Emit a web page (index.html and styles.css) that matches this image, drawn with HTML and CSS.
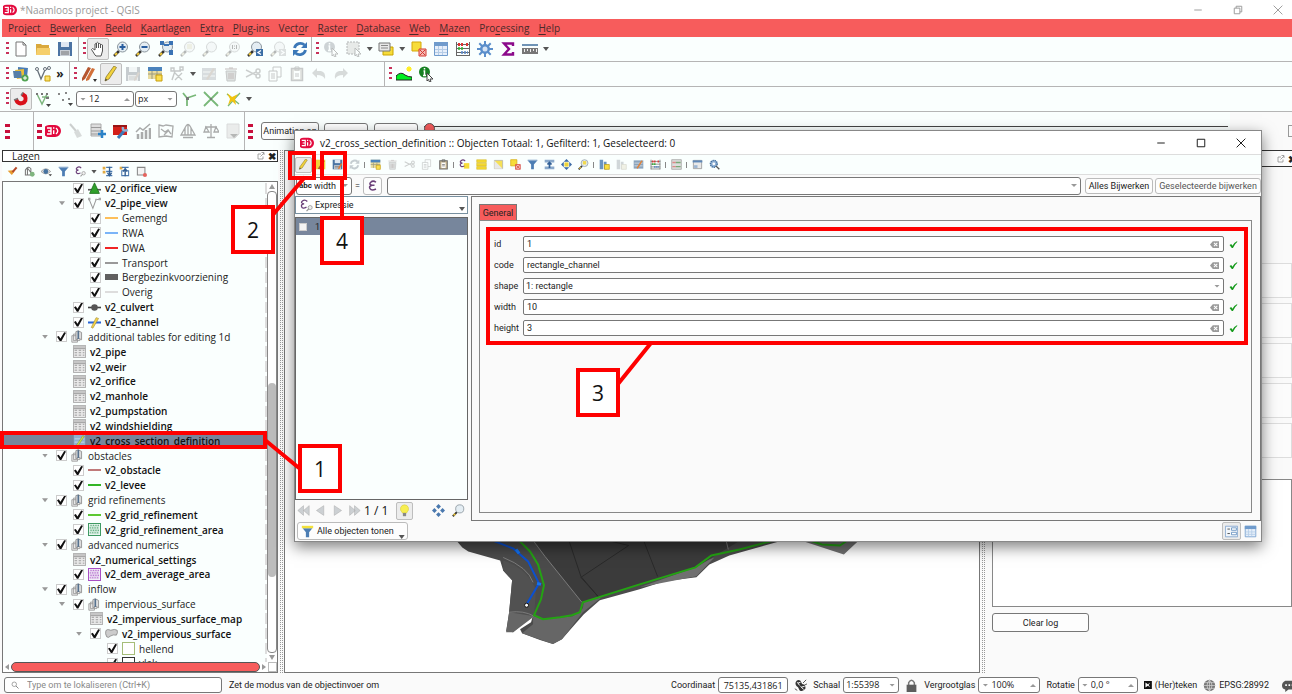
FILE: index.html
```html
<!DOCTYPE html>
<html lang="nl">
<head>
<meta charset="utf-8">
<title>*Naamloos project - QGIS</title>
<link rel="stylesheet" href="styles.css">
</head>
<body>
<svg class="sprite" aria-hidden="true">
<symbol id="logo" viewBox="0 0 16 16"><path d="M4 2h6a6 6 0 0 1 0 12H4a6 6 0 0 1 0-12z" fill="#e30a3e"/><path d="M2 5h4v6H2M3 8h3M8.700 7.200V11M8.700 4.300v1.500M11 5q3.500 3 0 6" fill="none" stroke="#fff" stroke-width="1.400"/></symbol>
<symbol id="new" viewBox="0 0 16 16"><path d="M3 1h7l3 3v11H3zM10 1v3h3" fill="#fff" stroke="#777"/></symbol>
<symbol id="open" viewBox="0 0 16 16"><path d="M1 3h5l1 1h7v10H1z" fill="#d9a93c"/><path d="M2 7h13v7H1z" fill="#f5cf6b"/></symbol>
<symbol id="save" viewBox="0 0 16 16"><path d="M1 1h14v14H1z" fill="#4b74a3"/><path d="M4 1h8v5H4z" fill="#dfe8f2"/><path d="M3 9h10v6H3z" fill="#c9cfd6"/><path d="M4 11h8M4 13h8" stroke="#777"/></symbol>
<symbol id="hand" viewBox="0 0 16 16"><path d="M5 14 1.500 8.500l1-1L5 9V3q1-1 1.500 0V2q1-1.500 2 0v1q1-1 2 0v1q1-1 2 0v6L11 15H6zM6.500 3v4M8.500 3v4M10.500 4v3" fill="#fff" stroke="#555"/></symbol>
<symbol id="lens" viewBox="0 0 16 16"><path d="M1 15l5-5" stroke="#333" stroke-width="2.500"/><path d="M2 14l2-2" stroke="#f0c93a" stroke-width="2"/><circle cx="9.500" cy="6" r="5" fill="#e4edf3" stroke="#8a959d"/></symbol>
<symbol id="zin" viewBox="0 0 16 16"><use href="#lens"/><path d="M9.500 3v6M6.500 6h6" stroke="#285d9e" stroke-width="2"/></symbol>
<symbol id="zout" viewBox="0 0 16 16"><use href="#lens"/><path d="M6.500 6h6" stroke="#285d9e" stroke-width="2"/></symbol>
<symbol id="zfull" viewBox="0 0 16 16"><use href="#lens"/><path d="M2 0h4v4H2zM11 0h4v4h-4zM11 9h4v5h-4zM6 3h5v2H6z" fill="#3a73b5"/></symbol>
<symbol id="zlay" viewBox="0 0 16 16"><use href="#lens"/><path d="M7 3h5v5H7z" fill="#f2d94e"/></symbol>
<symbol id="z11" viewBox="0 0 16 16"><use href="#lens"/><path d="M7.500 4v4M11.500 4v4M9.500 4.500v1M9.500 7v1" stroke="#333"/></symbol>
<symbol id="zprev" viewBox="0 0 16 16"><use href="#lens"/><path d="M9 8h7v7H9z" fill="#3a6da5"/><path d="M14 9.500l-3 2 3 2" fill="none" stroke="#fff" stroke-width="1.300"/></symbol>
<symbol id="znext" viewBox="0 0 16 16"><use href="#lens"/><path d="M9 8h7v7H9z" fill="#9ab"/><path d="M11 9.500l3 2-3 2" fill="none" stroke="#fff" stroke-width="1.300"/></symbol>
<symbol id="refresh" viewBox="0 0 16 16"><path d="M2.500 7a6 6 0 0 1 10-3M13.500 9a6 6 0 0 1-10 3" fill="none" stroke="#3b78b8" stroke-width="2.800"/><path d="M15 1v6H9zM1 15V9h6z" fill="#3b78b8"/></symbol>
<symbol id="cur" viewBox="0 0 16 16"><path d="M9 7l6 6-3 0 1 2.500-1.500.5-1-2.500L9 15z" fill="#fff" stroke="#444"/></symbol>
<symbol id="ident" viewBox="0 0 16 16"><circle cx="6.500" cy="6" r="5.500" fill="#168022"/><path d="M6.500 2v1.500M5.500 5h1v4.500M5 9.500h3" stroke="#fff" stroke-width="1.500" fill="none"/><use href="#cur"/></symbol>
<symbol id="identb" viewBox="0 0 16 16"><circle cx="6.500" cy="6" r="5.500" fill="#5c88b4"/><path d="M6.500 2v1.500M5.500 5h1v4.500M5 9.500h3" stroke="#fff" stroke-width="1.500" fill="none"/><use href="#cur"/></symbol>
<symbol id="select" viewBox="0 0 16 16"><path d="M1 1h12v12H1z" fill="#c8c8a8" stroke="#333" stroke-dasharray="2 1"/><use href="#cur"/></symbol>
<symbol id="layers" viewBox="0 0 16 16"><path d="M5 6h10v8H5z" fill="#f7dc3a" stroke="#c9a400"/><path d="M1 2h11v8H1z" fill="#e8e8e8" stroke="#777"/><path d="M3 4.500h7M3 7h7" stroke="#888"/></symbol>
<symbol id="desel" viewBox="0 0 16 16"><path d="M1 1h9v9H1z" fill="#f7dc3a" stroke="#d4a70a"/><path d="M8 8h7v7H8z" fill="#f3bcb6" stroke="#d43a33"/><path d="M9 14l5-5M9 9l5 5" stroke="#d43a33"/></symbol>
<symbol id="table" viewBox="0 0 16 16"><path d="M1.500 1.500h13v13h-13z" fill="#e6effa" stroke="#6f9bcc"/><path d="M1 1h14v4H1z" fill="#6f9bcc"/><path d="M5.500 5v9M9.500 5v9M2 8.500h12M2 11.500h12" stroke="#b4cce6"/></symbol>
<symbol id="abacus" viewBox="0 0 16 16"><path d="M1.500 1v14M14.500 1v14M1 14.500h14M1 3.500h14M1 7.500h14M1 11.500h14" stroke="#666" fill="none"/><path d="M3 3.500h2M6 3.500h2M11 3.500h2" stroke="#d33" stroke-width="3"/><path d="M3 7.500h2M6 7.500h2" stroke="#3a3" stroke-width="2.500"/><path d="M6 11.500h2M9 11.500h2M12 11.500h1" stroke="#5a85c0" stroke-width="2.500"/></symbol>
<symbol id="gear" viewBox="0 0 16 16"><path d="M8 0v16M0 8h16M2.300 2.300l11.400 11.400M13.700 2.300L2.300 13.700" stroke="#5b8fcb" stroke-width="2"/><circle cx="8" cy="8" r="5" fill="#5b8fcb"/><circle cx="8" cy="8" r="2.500" fill="#d5e4f5"/></symbol>
<symbol id="sigma" viewBox="0 0 16 16"><path d="M13 5V2.500H4L9 8l-5 5.500h9V11" fill="none" stroke="#8b0a8b" stroke-width="2.400"/></symbol>
<symbol id="ruler" viewBox="0 0 16 16"><path d="M0 4h16" stroke="#41709e" stroke-width="1.500"/><path d="M0 7h16v6H0z" fill="#777"/><path d="M2.500 8v3M5.500 8v2M8.500 8v3M11.500 8v2M14.500 8v3" stroke="#eee"/></symbol>
<symbol id="addlay" viewBox="0 0 16 16"><path d="M5 1l10 1-1 9-9-1z" fill="#4a7db5"/><path d="M2 4l9-1 0 9-7 1z" fill="#e9bd3a"/><path d="M0 5l8 0 1 7-8 0z" fill="#557fa8"/><circle cx="12" cy="12" r="3.500" fill="#51a351"/><path d="M12 10v4M10 12h4" stroke="#fff"/></symbol>
<symbol id="vlay" viewBox="0 0 16 16"><path d="M2 3l4 10 4-9 4-2" fill="none" stroke="#66717a" stroke-width="1.300"/><circle cx="2" cy="3" r="1.500" fill="#fff" stroke="#66717a"/><circle cx="10" cy="3" r="1.500" fill="#fff" stroke="#66717a"/><circle cx="14" cy="2" r="1.500" fill="#fff" stroke="#66717a"/><path d="M10 10h5v5h-5z" fill="#fbe36a" stroke="#c79e0b"/></symbol>
<symbol id="pens" viewBox="0 0 16 16"><path d="M1 12L7 1l3 1-6 11-3 2z" fill="#b5562f"/><path d="M5 13l6-11 3 1-6 11-3 1z" fill="#d2713a"/><path d="M12 13h4l-2 3z" fill="#333"/></symbol>
<symbol id="pen" viewBox="0 0 16 16"><path d="M3 11L11 0l2.500 1.500L6 13l-4 2z" fill="#f2d23c" stroke="#8d7a2a" stroke-width=".8"/><path d="M2 15l.7-2.500 1.600 1.500z" fill="#444"/></symbol>
<symbol id="saveed" viewBox="0 0 16 16"><use href="#save"/><path d="M9 13l4-7 2 1-4 7-2 1z" fill="#e07b39"/></symbol>
<symbol id="addrow" viewBox="0 0 16 16"><path d="M1 1h14v12H1z" fill="#e9dca0"/><path d="M1 1h14v4H1z" fill="#4b83bd"/><path d="M1 8h14M5 5v8M10 5v8" stroke="#9a9a80"/><path d="M9 9h6v6H9z" fill="#fbdf52" stroke="#c79e0b"/></symbol>
<symbol id="node" viewBox="0 0 16 16"><path d="M2 2h3v3H2zM11 1h3v3h-3zM3 14L6 5h6M6 14l7-7M6 7l7 7" fill="none" stroke="#666" stroke-width="1.400"/></symbol>
<symbol id="formpen" viewBox="0 0 16 16"><path d="M1 2h14v12H1z" fill="#8aa4bd"/><path d="M2 6h12M2 10h12" stroke="#eee"/><path d="M5 13l7-11 2 1-7 11z" fill="#e0833a"/></symbol>
<symbol id="formpeny" viewBox="0 0 16 16"><path d="M1 1h14v14H1z" fill="#f0d43a"/><path d="M4 14l8-12 2 1-7 12z" fill="#b5562f"/></symbol>
<symbol id="trash" viewBox="0 0 16 16"><path d="M3 5h10l-1 10H4z" fill="#aaa" stroke="#666"/><path d="M2 3h12M6 2h4M6 7v6M8 7v6M10 7v6" stroke="#a33" fill="none"/></symbol>
<symbol id="cut" viewBox="0 0 16 16"><path d="M1 4l10 5M1 11l10-5" stroke="#777" stroke-width="1.500"/><circle cx="13" cy="5" r="2" fill="none" stroke="#777" stroke-width="1.500"/><circle cx="13" cy="10" r="2" fill="none" stroke="#777" stroke-width="1.500"/></symbol>
<symbol id="copy" viewBox="0 0 16 16"><path d="M6 1h8v10H6z" fill="#fff" stroke="#666"/><path d="M2 5h8v10H2zM4 8h4M4 10h4M4 12h4" fill="#fff" stroke="#666"/></symbol>
<symbol id="paste" viewBox="0 0 16 16"><path d="M2.500 2.500h11v12h-11z" fill="#cdb98f" stroke="#6d6d6d" stroke-width="1.500"/><path d="M5 5h6v8H5z" fill="#fff"/><path d="M6 1h4v3H6zM6 8h4M6 10h4" stroke="#666" fill="none"/></symbol>
<symbol id="undo" viewBox="0 0 16 16"><path d="M6 2v3h4q5 1 4 8-2-4-8-4v3L1 7z" fill="#999"/></symbol>
<symbol id="redo" viewBox="0 0 16 16"><path d="M10 2v3H6Q1 6 2 13q2-4 8-4v3l5-5z" fill="#999"/></symbol>
<symbol id="hill" viewBox="0 0 16 16"><path d="M0 14V10q5-5 9-1 3 2 7 2v3z" fill="#00f020" stroke="#222"/><circle cx="13" cy="3" r="2" fill="#ffee20"/><path d="M13 0v6M10 3h6M11 1l4 4M15 1l-4 4" stroke="#ffee20"/></symbol>
<symbol id="magnet" viewBox="0 0 16 16"><path d="M3 8.500q2 5 6.500 3.500T12 5L9 3" fill="none" stroke="#d9101a" stroke-width="4"/><path d="M1 9l4-1.500M8 4.500l2-3" stroke="#777" stroke-width="1.500"/></symbol>
<symbol id="vert" viewBox="0 0 16 16"><path d="M2 3l5 10 5-10M7 6h7" fill="none" stroke="#7fb77f" stroke-width="1.500"/><path d="M1 2h2v2H1zM6 2h2v2H6zM11 2h2v2h-2zM11 6h3v2h-3z" fill="#777"/><path d="M11 13h5l-2.500 3z" fill="#444"/></symbol>
<symbol id="dots" viewBox="0 0 16 16"><path d="M1 2h2v2H1zM8 1h2v2H8zM5 8h2v2H5zM11 7h2v2h-2z" fill="#888"/><path d="M11 12h5l-2.500 3z" fill="#444"/></symbol>
<symbol id="topo" viewBox="0 0 16 16"><path d="M2 2l4 5v8M6 7l9-3" fill="none" stroke="#79b879" stroke-width="1.800"/><path d="M5 6h3v3H5z" fill="#777"/></symbol>
<symbol id="cross" viewBox="0 0 16 16"><path d="M1 1l14 14M15 1L1 15" stroke="#79b879" stroke-width="1.800"/><path d="M7 7h2v2H7z" fill="#777"/></symbol>
<symbol id="trace" viewBox="0 0 16 16"><path d="M3 15L15 2M2 3l12 10" stroke="#79b879" stroke-width="1.300"/><path d="M2 2l5 4 6-3-3 5 1 6-4-4-4 4 2-6z" fill="#f2c40f"/></symbol>
<symbol id="broom" viewBox="0 0 16 16"><path d="M2 1l6 7" stroke="#777" stroke-width="2"/><path d="M6 9l4-3 4 7-5 2z" fill="#999"/></symbol>
<symbol id="dbadd" viewBox="0 0 16 16"><path d="M1 1h10v12H1z" fill="#ddd" stroke="#aaa"/><path d="M1 4.500h10M1 8h10M1 11h10" stroke="#999"/><path d="M12 7v8M8 11h8" stroke="#2c83c8" stroke-width="2.500"/></symbol>
<symbol id="tool" viewBox="0 0 16 16"><path d="M0 2h14v10H0z" fill="#d3201a"/><path d="M0 2h14v2H0z" fill="#991414"/><path d="M5 15l6-7" stroke="#3b79b8" stroke-width="3"/><path d="M10 4q-1 5 5 3" fill="none" stroke="#8fb3d6" stroke-width="2.500"/></symbol>
<symbol id="chart" viewBox="0 0 16 16"><path d="M3 11v5M7 9v7M11 7v9M15 5v11" stroke="#888" stroke-width="2.500"/><path d="M1 9l4-4 3 2 7-6" fill="none" stroke="#888" stroke-width="1.500"/></symbol>
<symbol id="mapi" viewBox="0 0 16 16"><path d="M1 2l4 1 3-1 7 1-1 11-6-1-7 1zM3 6l4 3 3-2 3 4M6 12l5-5" fill="none" stroke="#888" stroke-width="1.300"/></symbol>
<symbol id="dam" viewBox="0 0 16 16"><path d="M1 12L6 3q2-3 4 0l5 9zM5 5v7M8 2v10M11 5v7M3 14.500h10" fill="none" stroke="#888" stroke-width="1.300"/></symbol>
<symbol id="scale" viewBox="0 0 16 16"><path d="M8 1v13M4 14.500h8M2 4h12M3 4L1 9h5zM13 4l-2 5h5z" fill="none" stroke="#888" stroke-width="1.300"/></symbol>
<symbol id="note" viewBox="0 0 16 16"><path d="M2 1h12v10l-4 4H2z" fill="#e4e4e4" stroke="#ccc"/><path d="M5 11h8l-4 4z" fill="#999"/></symbol>
<symbol id="brush" viewBox="0 0 16 16"><path d="M1 7l6 6 4-5-3-2z" fill="#e69c2f"/><path d="M8 9l6-7" stroke="#b54a2a" stroke-width="3"/></symbol>
<symbol id="grpadd" viewBox="0 0 16 16"><path d="M2 13V6q4-7 8-2v9zM5 3v10M5 3l6 8" fill="none" stroke="#777" stroke-width="1.500"/><circle cx="12" cy="12" r="3.500" fill="#7fb57f"/></symbol>
<symbol id="eye" viewBox="0 0 16 16"><path d="M0 8q7-8 14 0-7 7-14 0z" fill="#ddd" stroke="#888"/><circle cx="7" cy="8" r="3.500" fill="#44729f"/><path d="M11 12h5l-2.500 3z" fill="#444"/></symbol>
<symbol id="filter" viewBox="0 0 16 16"><path d="M1 2h14L10 8v7H6V8z" fill="#4d7eb4"/><path d="M1 1h14v2H1z" fill="#8aa9cb"/></symbol>
<symbol id="filtery" viewBox="0 0 16 16"><path d="M2 4h12L10 9v6H6V9z" fill="#4d7eb4"/><path d="M1 1h14v3H1z" fill="#f3e23c"/></symbol>
<symbol id="eps" viewBox="0 0 16 16"><path d="M12 3Q8 0 5 3t2 4Q2 8 4 11.500T12 12M7 7h3" fill="none" stroke="#6a3f78" stroke-width="2"/></symbol>
<symbol id="epss" viewBox="0 0 16 16"><path d="M9 3Q6 0 3 2.500T5 6Q1 6.500 2 9.500T8 10" fill="none" stroke="#6a3f78" stroke-width="1.600"/><circle cx="12.500" cy="10.500" r="2.500" fill="#eee" stroke="#999"/><path d="M8 15l3-3" stroke="#999" stroke-width="1.500"/></symbol>
<symbol id="epsy" viewBox="0 0 16 16"><path d="M7 6h8v8H7z" fill="#f7dc3a"/><path d="M9 3Q6 0 3 2.500T5 6Q1 6.500 2 9.500T8 10" fill="none" stroke="#6a3f78" stroke-width="1.600"/></symbol>
<symbol id="expand" viewBox="0 0 16 16"><path d="M1 1h4v4H1zM1 7h4v4H1z" fill="#e1aa43"/><path d="M6 2h9M6 8h9M6 14h9" stroke="#4a79ae" stroke-width="2"/><path d="M11 1v12M8 10l3 4 3-4" stroke="#345f92" stroke-width="2" fill="none"/></symbol>
<symbol id="collapse" viewBox="0 0 16 16"><path d="M1 1h4v4H1z" fill="#e1aa43"/><path d="M4 2h10M4 7h10v7H4z" stroke="#4a79ae" stroke-width="1.500" fill="none"/><path d="M9 15V5M6 8l3-4 3 4" stroke="#345f92" stroke-width="2" fill="none"/></symbol>
<symbol id="remove" viewBox="0 0 16 16"><path d="M2 2h11v11H2z" fill="#f4f4f4" stroke="#888" stroke-width="1.500"/><circle cx="13" cy="13" r="3" fill="#e4635d"/></symbol>
<symbol id="rows" viewBox="0 0 16 16"><path d="M1 1h14v4H1zM1 6h14v4H1zM1 11h14v4H1z" fill="#f5d92f" stroke="#ceb323" stroke-width=".7"/></symbol>
<symbol id="invert" viewBox="0 0 16 16"><path d="M2 2h12v12H2z" fill="#f5e056" stroke="#aaa"/><path d="M2 2l12 12H2z" fill="#e8e8e8"/></symbol>
<symbol id="top" viewBox="0 0 16 16"><path d="M1 1h14v4H1zM1 11h14v4H1z" fill="#8aa9cb"/><path d="M8 13V7M5 8l3-3 3 3" stroke="#315f96" stroke-width="2.500" fill="none"/></symbol>
<symbol id="panto" viewBox="0 0 16 16"><path d="M8 0l4 4H4zM8 16l4-4H4zM0 8l4-4v8zM16 8l-4-4v8z" fill="#3d6ba5"/><path d="M5 5h6v6H5z" fill="#eed439"/></symbol>
<symbol id="pan" viewBox="0 0 16 16"><path d="M8 0l3 3-3 3-3-3zM8 10l3 3-3 3-3-3zM3 5l3 3-3 3-3-3zM13 5l3 3-3 3-3-3z" fill="#4a78ae"/></symbol>
<symbol id="col" viewBox="0 0 16 16"><path d="M1 1h5v14H1zM7 4h4v11H7z" fill="#6a93bf"/><path d="M8 8h7v7H8z" fill="#f8dd3e" stroke="#b99713"/></symbol>
<symbol id="cond" viewBox="0 0 16 16"><path d="M1 1h14v14H1z" fill="#ddd" stroke="#999"/><path d="M2 5h5M2 11h5" stroke="#d88" stroke-width="2"/><path d="M7 5h7M7 11h7" stroke="#7a7" stroke-width="2"/></symbol>
<symbol id="dock" viewBox="0 0 16 16"><path d="M2 2h12v12H2z" fill="#e8e8e8" stroke="#888"/><path d="M1 2h14v3H1z" fill="#5f88b7"/><path d="M3 9h5v4H3z" fill="#9ab5d3"/></symbol>
<symbol id="zgear" viewBox="0 0 16 16"><circle cx="7" cy="7" r="5" fill="#8eb0d4" stroke="#44709f" stroke-width="2" stroke-dasharray="2 1"/><circle cx="7" cy="7" r="2" fill="#fff"/><path d="M10 10l5 5" stroke="#555" stroke-width="2"/></symbol>
<symbol id="first" viewBox="0 0 16 16"><path d="M8 2v12L1 8zM15 2v12L8 8z" fill="#ccd0d3" stroke="#aaa" stroke-width=".6"/></symbol>
<symbol id="prev" viewBox="0 0 16 16"><path d="M12 2v12L3 8z" fill="#ccd0d3" stroke="#aaa" stroke-width=".6"/></symbol>
<symbol id="next" viewBox="0 0 16 16"><path d="M4 2v12l9-6z" fill="#ccd0d3" stroke="#aaa" stroke-width=".6"/></symbol>
<symbol id="last" viewBox="0 0 16 16"><path d="M2 2v12l7-6zM8 2v12l7-6z" fill="#ccd0d3" stroke="#aaa" stroke-width=".6"/></symbol>
<symbol id="bulb" viewBox="0 0 16 16"><path d="M8 1a5 5 0 0 1 3 9v1H5v-1A5 5 0 0 1 8 1z" fill="#f7ee50" stroke="#d5cb42" stroke-width=".7"/><path d="M6 11h4v4H6z" fill="#888"/></symbol>
<symbol id="formv" viewBox="0 0 16 16"><path d="M.5 1.500h15v13H.5z" fill="#f1f6fb" stroke="#7ba0cb"/><path d="M8 3.500h6v3H8zM8 9h6v3H8z" fill="#fff" stroke="#5f8bbd"/><path d="M3 5h3M3 10.500h3" stroke="#333"/></symbol>
<symbol id="group" viewBox="0 0 16 16"><path d="M1 7h7v8H1zM3 5h8v8H3z" fill="#e8e8e8" stroke="#999"/><path d="M6 2l3-1 4 2v9l-4-2-3 2z" fill="#ddd" stroke="#888"/><path d="M9 1v10" stroke="#56728f" stroke-width="2"/></symbol>
<symbol id="tbl" viewBox="0 0 16 16"><path d="M.5.5h15v15H.5z" fill="#e9e9e9" stroke="#9b9b9b"/><path d="M1 1h14v3H1z" fill="#c6c6c6"/><path d="M2 6.500h3M2 9.500h3M2 12.500h3M7 6.500h3M7 9.500h3M7 12.500h3M12 6.500h2M12 9.500h2M12 12.500h2M1 4.500h14" stroke="#8c8c8c"/></symbol>
<symbol id="tblpen" viewBox="0 0 16 16"><path d="M1 1h14v14H1z" fill="#8fb0d0"/><path d="M2 6h12M2 10h12" stroke="#cfe0ee"/><path d="M4 14l8-12 2 1-8 12z" fill="#c9dc4c" stroke="#7d8c35" stroke-width=".6"/></symbol>
<symbol id="ori" viewBox="0 0 16 16"><path d="M0 9.500h16" stroke="#555" stroke-width="2"/><path d="M8 1l6 13H2z" fill="#2fa02b" stroke="#1c6e1b"/></symbol>
<symbol id="vee" viewBox="0 0 16 16"><path d="M1 2l5 12 4-11h5" fill="none" stroke="#999" stroke-width="1.300"/><path d="M0 1h3v3H0zM9 2h2v2H9zM13 1h3v3h-3z" fill="#aaa"/></symbol>
<symbol id="cul" viewBox="0 0 16 16"><path d="M0 8h16" stroke="#444" stroke-width="2"/><circle cx="8" cy="8" r="4" fill="#555"/></symbol>
<symbol id="chan" viewBox="0 0 16 16"><path d="M0 8h16" stroke="#2965d8" stroke-width="2.500"/><path d="M4 14l6-12 3 1-7 12z" fill="#f5d44a" stroke="#9a8430" stroke-width=".7"/></symbol>
<symbol id="blob" viewBox="0 0 16 16"><path d="M1 5q1-3 6-1 5-2 8 0 1 3-1 6-4-1-7 1-3 3-5 1Q0 8 1 5z" fill="#ccc" stroke="#888"/></symbol>
<symbol id="hatch" viewBox="0 0 16 16"><path d="M.5.5h15v15H.5z" fill="none" stroke="currentColor" stroke-width="1.500"/><path d="M2 2h12v12H2z" fill="currentColor" opacity=".25"/><path d="M3 3h11M2 6h12M3 9h11M2 12h12" stroke="currentColor" stroke-width="1.500" stroke-dasharray="1.500 1.500" opacity=".7"/></symbol>
<symbol id="mini" viewBox="0 0 16 16"><path d="M2 8h12" stroke="currentColor" stroke-width="1.500"/></symbol>
<symbol id="maxi" viewBox="0 0 16 16"><path d="M2 2h12v12H2z" fill="none" stroke="currentColor" stroke-width="1.500"/></symbol>
<symbol id="rest" viewBox="0 0 16 16"><path d="M2 5h9v9H2zM5 5V2h9v9h-3" fill="none" stroke="currentColor" stroke-width="1.500"/></symbol>
<symbol id="x" viewBox="0 0 16 16"><path d="M1 1l14 14M15 1L1 15" stroke="currentColor" stroke-width="1.500"/></symbol>
<symbol id="float" viewBox="0 0 16 16"><path d="M8 4H2v10h10V9M7 9l7-7M9 1h5v5" fill="none" stroke="#888" stroke-width="1.500"/></symbol>
<symbol id="search" viewBox="0 0 16 16"><circle cx="6.500" cy="6.500" r="4.500" fill="none" stroke="#888" stroke-width="1.500"/><path d="M10 10l5 5" stroke="#888" stroke-width="2"/></symbol>
<symbol id="ok" viewBox="0 0 16 16"><path d="M1 9l3-2 2 3q3-6 8-8l1 1q-5 4-8 11H5z" fill="#169a1c"/></symbol>
<symbol id="clear" viewBox="0 0 16 16"><path d="M5 2h11v12H5L0 8z" fill="#9a9a9a"/><path d="M7 5l6 6M13 5l-6 6" stroke="#fff" stroke-width="1.800"/></symbol>
<symbol id="lock" viewBox="0 0 16 16"><path d="M4.500 8V4.500q3.500-6 7 0V8" fill="none" stroke="#777" stroke-width="1.800"/><path d="M2 7h12v9H2z" fill="#5d5d5d"/></symbol>
<symbol id="globe" viewBox="0 0 16 16"><circle cx="8" cy="8" r="7" fill="#777"/><path d="M1 8h14M2 4.500h12M2 11.500h12M8 1v14M8 1q-6 7 0 14M8 1q6 7 0 14" fill="none" stroke="#ddd" stroke-width=".8"/></symbol>
<symbol id="bubble" viewBox="0 0 16 16"><path d="M4 2h12v11H8l-4 3v-3Q0 12 0 8t4-6z" fill="#555"/><path d="M4 7.500h2M8 7.500h2M12 7.500h2" stroke="#fff" stroke-width="2"/></symbol>
<symbol id="mouse" viewBox="0 0 16 16"><path d="M2 4q2-4 6-2l2 4q5 1 4 6-3 4-7 2L5 10Q1 8 2 4z" fill="#333"/><path d="M4 4l3 4M8 4l-3 1M8 9l4 4M13 9l-4 1" stroke="#fff" stroke-width="1.200"/><path d="M11 5l4-4M12 8l4-2M1 12l3 2" stroke="#333"/></symbol>
</svg>

<header class="titlebar">
  <svg class="ico"><use href="#logo"/></svg><span class="title-text">*Naamloos project - QGIS</span>
  <div class="win-controls">
    <button aria-label="Minimaliseren"><svg><use href="#mini"/></svg></button>
    <button aria-label="Herstellen"><svg><use href="#rest"/></svg></button>
    <button aria-label="Sluiten"><svg><use href="#x"/></svg></button>
  </div>
</header>
<nav class="menubar">
  <button>Pro<u>j</u>ect</button><button><u>B</u>ewerken</button><button><u>B</u>eeld</button><button><u>K</u>aartlagen</button><button>E<u>x</u>tra</button><button><u>P</u>lug-ins</button><button>Vect<u>o</u>r</button><button><u>R</u>aster</button><button><u>D</u>atabase</button><button><u>W</u>eb</button><button><u>M</u>azen</button><button>Pro<u>c</u>essing</button><button><u>H</u>elp</button>
</nav>
<div class="toolbar">
  <div class="tools w74"><i class="grip"></i><button class="t"><svg><use href="#new"/></svg></button><button class="t"><svg><use href="#open"/></svg></button><button class="t"><svg><use href="#save"/></svg></button></div>
  <div class="tools w233"><i class="grip"></i><button class="t on"><svg><use href="#hand"/></svg></button><button class="t"><svg><use href="#zin"/></svg></button><button class="t"><svg><use href="#zout"/></svg></button><button class="t"><svg><use href="#zfull"/></svg></button><button class="t off"><svg><use href="#zlay"/></svg></button><button class="t off"><svg><use href="#lens"/></svg></button><button class="t off"><svg><use href="#z11"/></svg></button><button class="t"><svg><use href="#zprev"/></svg></button><button class="t off"><svg><use href="#znext"/></svg></button><button class="t"><svg><use href="#refresh"/></svg></button></div>
  <div class="tools w239"><i class="grip"></i><button class="t off"><svg><use href="#identb"/></svg></button><button class="t off"><svg><use href="#select"/></svg></button><i class="caret"></i><button class="t"><svg><use href="#layers"/></svg></button><i class="caret"></i><button class="t"><svg><use href="#desel"/></svg></button><button class="t"><svg><use href="#table"/></svg></button><button class="t"><svg><use href="#abacus"/></svg></button><button class="t"><svg><use href="#gear"/></svg></button><button class="t"><svg><use href="#sigma"/></svg></button><button class="t"><svg><use href="#ruler"/></svg></button><i class="caret"></i></div>
</div>
<div class="toolbar">
  <div class="tools w65"><i class="grip"></i><button class="t"><svg><use href="#addlay"/></svg></button><button class="t"><svg><use href="#vlay"/></svg></button><b class="more">»</b></div>
  <div class="tools w315"><i class="grip"></i><button class="t"><svg><use href="#pens"/></svg></button><button class="t on"><svg><use href="#pen"/></svg></button><button class="t off"><svg><use href="#saveed"/></svg></button><button class="t"><svg><use href="#addrow"/></svg></button><button class="t off"><svg><use href="#node"/></svg></button><i class="caret"></i><button class="t off"><svg><use href="#formpen"/></svg></button><button class="t off"><svg><use href="#trash"/></svg></button><button class="t off"><svg><use href="#cut"/></svg></button><button class="t off"><svg><use href="#copy"/></svg></button><button class="t off"><svg><use href="#paste"/></svg></button><button class="t off"><svg><use href="#undo"/></svg></button><button class="t off"><svg><use href="#redo"/></svg></button></div>
  <div class="tools"><i class="grip"></i><button class="t"><svg><use href="#hill"/></svg></button><button class="t"><svg><use href="#ident"/></svg></button></div>
</div>
<div class="toolbar">
  <div class="tools"><i class="grip"></i><button class="t on"><svg><use href="#magnet"/></svg></button><button class="t"><svg><use href="#vert"/></svg></button><button class="t"><svg><use href="#dots"/></svg></button>
  <label class="spin w58"><input aria-label="Tolerantie" value="12"></label><label class="combo w42"><select aria-label="Eenheid"><option>px</option></select></label>
  <button class="t"><svg><use href="#topo"/></svg></button><button class="t"><svg><use href="#cross"/></svg></button><button class="t"><svg><use href="#trace"/></svg></button><i class="caret"></i></div>
</div>
<div class="toolbar tall">
  <div class="tools w29"><i class="grip big"></i></div>
  <div class="tools w211"><i class="grip big"></i><button class="t"><svg><use href="#logo"/></svg></button><button class="t off"><svg><use href="#broom"/></svg></button><button class="t"><svg><use href="#dbadd"/></svg></button><button class="t"><svg><use href="#tool"/></svg></button><button class="t half"><svg><use href="#chart"/></svg></button><button class="t half"><svg><use href="#mapi"/></svg></button><button class="t half"><svg><use href="#dam"/></svg></button><button class="t half"><svg><use href="#scale"/></svg></button><button class="t half"><svg><use href="#note"/></svg></button></div>
  <div class="anim"><i class="grip big"></i><button class="btn w58">Animation on</button><label class="combo w44"><select aria-label="Parameter"></select></label><label class="combo w44"><select aria-label="Eenheid parameter"></select></label><input class="slider" type="range" value="0" aria-label="Tijd"></div>
  <div class="anim-end"><input type="checkbox" class="edge-check" aria-label="Opties"></div>
</div>

<main class="work">
  <section class="layers">
    <div class="dock-title"><span>Lagen</span><svg class="s8"><use href="#float"/></svg><b>✖</b></div>
    <div class="layer-tools"><button><svg><use href="#brush"/></svg></button><button><svg><use href="#grpadd"/></svg></button><button><svg><use href="#eye"/></svg></button><button><svg><use href="#filter"/></svg></button><button><svg><use href="#epss"/></svg></button><i class="caret"></i><button><svg><use href="#expand"/></svg></button><button><svg><use href="#collapse"/></svg></button><button><svg><use href="#remove"/></svg></button></div>
    <div class="tree-box">
      <div class="tree-main">
      <div class="tree-clip">
      <ul class="tree">
        <li class="l2"><i></i><label><input type="checkbox" checked><svg><use href="#ori"/></svg><b>v2_orifice_view</b></label></li>
        <li class="l2"><i class="open"></i><label><input type="checkbox" checked><svg><use href="#vee"/></svg><b>v2_pipe_view</b></label></li>
        <li class="l3"><i></i><label><input type="checkbox" checked><span class="ln c-orange"></span>Gemengd</label></li>
        <li class="l3"><i></i><label><input type="checkbox" checked><span class="ln c-blue"></span>RWA</label></li>
        <li class="l3"><i></i><label><input type="checkbox" checked><span class="ln c-red"></span>DWA</label></li>
        <li class="l3"><i></i><label><input type="checkbox" checked><span class="ln c-grey"></span>Transport</label></li>
        <li class="l3"><i></i><label><input type="checkbox" checked><span class="ln thick"></span>Bergbezinkvoorziening</label></li>
        <li class="l3"><i></i><label><input type="checkbox" checked><span class="ln c-light"></span>Overig</label></li>
        <li class="l2"><i></i><label><input type="checkbox" checked><svg><use href="#cul"/></svg><b>v2_culvert</b></label></li>
        <li class="l2"><i></i><label><input type="checkbox" checked><svg><use href="#chan"/></svg><b>v2_channel</b></label></li>
        <li class="l1"><i class="open"></i><label><input type="checkbox" checked><svg><use href="#group"/></svg>additional tables for editing 1d</label></li>
        <li class="l2"><i></i><svg><use href="#tbl"/></svg><b>v2_pipe</b></li>
        <li class="l2"><i></i><svg><use href="#tbl"/></svg><b>v2_weir</b></li>
        <li class="l2"><i></i><svg><use href="#tbl"/></svg><b>v2_orifice</b></li>
        <li class="l2"><i></i><svg><use href="#tbl"/></svg><b>v2_manhole</b></li>
        <li class="l2"><i></i><svg><use href="#tbl"/></svg><b>v2_pumpstation</b></li>
        <li class="l2"><i></i><svg><use href="#tbl"/></svg><b>v2_windshielding</b></li>
        <li class="l2 current"><i></i><svg><use href="#tblpen"/></svg><b><u>v2_cross_section_definition</u></b></li>
        <li class="l1"><i class="open"></i><label><input type="checkbox" checked><svg><use href="#group"/></svg>obstacles</label></li>
        <li class="l2"><i></i><label><input type="checkbox" checked><span class="ln c-brown"></span><b>v2_obstacle</b></label></li>
        <li class="l2"><i></i><label><input type="checkbox" checked><span class="ln c-green"></span><b>v2_levee</b></label></li>
        <li class="l1"><i class="open"></i><label><input type="checkbox" checked><svg><use href="#group"/></svg>grid refinements</label></li>
        <li class="l2"><i></i><label><input type="checkbox" checked><span class="ln c-lime"></span><b>v2_grid_refinement</b></label></li>
        <li class="l2"><i></i><label><input type="checkbox" checked><svg class="h-green"><use href="#hatch"/></svg><b>v2_grid_refinement_area</b></label></li>
        <li class="l1"><i class="open"></i><label><input type="checkbox" checked><svg><use href="#group"/></svg>advanced numerics</label></li>
        <li class="l2"><i></i><svg><use href="#tbl"/></svg><b>v2_numerical_settings</b></li>
        <li class="l2"><i></i><label><input type="checkbox" checked><svg class="h-purple"><use href="#hatch"/></svg><b>v2_dem_average_area</b></label></li>
        <li class="l1"><i class="open"></i><label><input type="checkbox" checked><svg><use href="#group"/></svg>inflow</label></li>
        <li class="l2"><i class="open"></i><label><input type="checkbox" checked><svg><use href="#group"/></svg>impervious_surface</label></li>
        <li class="l3"><i></i><svg><use href="#tbl"/></svg><b>v2_impervious_surface_map</b></li>
        <li class="l3"><i class="open"></i><label><input type="checkbox" checked><svg><use href="#blob"/></svg><b>v2_impervious_surface</b></label></li>
        <li class="l4"><i></i><label><input type="checkbox" checked><span class="sq olive"></span>hellend</label></li>
        <li class="l4"><i></i><label><input type="checkbox" checked><span class="sq"></span>vlak</label></li>
      </ul>
      </div>
      <div class="vscroll"><i class="up"></i><div class="track"><div class="thumb"></div></div><i class="down"></i></div>
      </div>
      <div class="hscroll"><i class="left"></i><div class="hthumb"></div><i class="right"></i><span></span></div>
    </div>
  </section>
  <div class="splitter"></div>
  <section class="map">
    <svg viewBox="284 150 696 523" preserveAspectRatio="xMinYMin meet" role="img" aria-label="Kaart">
      <path d="M450 530l6 11 6 7 6 4 32 9 3 10 9 10-3 32-3 19 7 1 7-6 10-8 3-3-2 7-11 7 2 4 18 7 13 4 9-5 14-16 8-9 16-14 40-11 25-8 32-4 13-13 20-9 50-14v-15z" fill="#4b4b4b"/>
      <path d="M509 613l16 1 9 3 9 3 30-3 10-8 1-6 18-5-19 15-21 27-9 5-31-11 11-9 0-7-20 15-7 0z" fill="#666"/>
      <path d="M503 571l0-10q25 8 33 30l-2 26-25-4 3-32z" fill="#515151"/>
      <path d="M534 541l11 16 37 46 58-18 56-17 45-27z" fill="#3b3b3b"/>
      <path d="M640 588l56-20 14-8 5-2-18 19zM802 541l43 14 15-14z" fill="#707070"/>
      <path d="M533 541l12 16 37 46M509 613q15-2 25 4M724 530l5 20M503 558q25 10 30 25" fill="none" stroke="#7a7a7a"/>
      <path d="M569 541l12 36 18 21M644 541l14 36M599 598l-18-20 48-32M608 541l21 5" fill="none" stroke="#292929"/>
      <path d="M519 541l11 11 8 13 6 21-3 14-7 16 9 4 17-2 12-2 8-3 3-10 57-18 56-17 16-12 28-6 42-11M808 540l15 5 18 1 9-6" fill="none" stroke="#24a313" stroke-width="2"/>
      <path d="M490 540l23 9 15 13 11 22-13 22" fill="none" stroke="#0b50d0" stroke-width="2"/>
      <path d="M516 550l3 4M537 584l4 1" stroke="#1473f0" stroke-width="3"/>
      <circle cx="526.500" cy="606" r="2" fill="#fff" stroke="#111"/>
    </svg>
  </section>
  <div class="splitter"></div>
  <section class="results">
    <div class="dock-title"><span></span><svg class="s8"><use href="#float"/></svg><b>✖</b></div>
    <div class="result-list"><div></div><div></div><div></div><div></div><div></div></div>
    <div class="log"></div>
    <button class="btn clear-log">Clear log</button>
  </section>
</main>

<footer class="status">
  <label class="locate"><svg class="s8"><use href="#search"/></svg><input placeholder="Type om te lokaliseren (Ctrl+K)" aria-label="Lokaliseren"></label>
  <span class="hint">Zet de modus van de objectinvoer om</span>
  <label class="pair">Coordinaat <input class="field w70" value="75135,431861"></label>
  <svg class="s13"><use href="#mouse"/></svg>
  <label class="pair">Schaal <span class="combo w56"><select><option>1:55398</option></select></span></label>
  <svg class="s13"><use href="#lock"/></svg>
  <label class="pair">Vergrootglas <span class="spin w62"><input value="100%"></span></label>
  <label class="pair">Rotatie <span class="spin w60"><input value="0,0 °"></span></label>
  <label class="pair render"><input type="checkbox" checked>(Her)teken</label>
  <button class="crs"><svg class="s13"><use href="#globe"/></svg>EPSG:28992</button>
  <button class="crs"><svg class="s13"><use href="#bubble"/></svg></button>
</footer>

<section class="dialog" role="dialog" aria-label="v2_cross_section_definition">
  <div class="dialog-title"><svg class="ico"><use href="#logo"/></svg><span class="title-text">v2_cross_section_definition :: Objecten Totaal: 1, Gefilterd: 1, Geselecteerd: 0</span>
    <div class="win-controls"><button aria-label="Minimaliseren"><svg><use href="#mini"/></svg></button><button aria-label="Maximaliseren"><svg><use href="#maxi"/></svg></button><button aria-label="Sluiten"><svg><use href="#x"/></svg></button></div>
  </div>
  <div class="dialog-tools"><button class="on"><svg><use href="#pen"/></svg></button><button><svg><use href="#formpeny"/></svg></button><button><svg><use href="#saveed"/></svg></button><button class="off"><svg><use href="#refresh"/></svg></button><hr><button><svg><use href="#addrow"/></svg></button><button class="off"><svg><use href="#trash"/></svg></button><button class="off"><svg><use href="#cut"/></svg></button><button class="off"><svg><use href="#copy"/></svg></button><button><svg><use href="#paste"/></svg></button><hr><button><svg><use href="#epsy"/></svg></button><button><svg><use href="#rows"/></svg></button><button><svg><use href="#invert"/></svg></button><button><svg><use href="#desel"/></svg></button><button><svg><use href="#filter"/></svg></button><button><svg><use href="#top"/></svg></button><button><svg><use href="#panto"/></svg></button><button><svg><use href="#zlay"/></svg></button><hr><button><svg><use href="#col"/></svg></button><button class="off"><svg><use href="#col"/></svg></button><button><svg><use href="#formpen"/></svg></button><button><svg><use href="#abacus"/></svg></button><hr><button><svg><use href="#cond"/></svg></button><hr><button><svg><use href="#dock"/></svg></button><button><svg><use href="#zgear"/></svg></button></div>
  <div class="calc">
    <label class="combo w56"><span class="abc">abc</span><select aria-label="Veld"><option>width</option></select></label><span class="eq">=</span><button class="btn sq18" aria-label="Expressie"><svg class="s12"><use href="#eps"/></svg></button>
    <label class="combo grow"><select aria-label="Waarde"></select></label>
    <button class="btn soft w68">Alles Bijwerken</button><button class="btn soft dim w106">Geselecteerde bijwerken</button>
  </div>
  <div class="dialog-body">
    <div class="list-side">
      <button class="expr"><svg class="s13"><use href="#epss"/></svg>Expressie<i class="caret"></i></button>
      <div class="feature-list"><label class="feature"><input type="checkbox"><span>1</span></label></div>
      <div class="pager"><button><svg><use href="#first"/></svg></button><button><svg><use href="#prev"/></svg></button><button><svg><use href="#next"/></svg></button><button><svg><use href="#last"/></svg></button><span class="count">1 / 1</span><button class="on"><svg><use href="#bulb"/></svg></button><span class="fill"></span><button><svg><use href="#pan"/></svg></button><button><svg><use href="#lens"/></svg></button></div>
    </div>
    <div class="form-side">
      <button class="tab">General</button>
      <div class="tab-page">
        <form class="attrs">
          <label for="a-id">id</label><span class="box"><input id="a-id" value="1"><svg class="s9"><use href="#clear"/></svg></span><svg class="s9"><use href="#ok"/></svg>
          <label for="a-code">code</label><span class="box"><input id="a-code" value="rectangle_channel"><svg class="s9"><use href="#clear"/></svg></span><svg class="s9"><use href="#ok"/></svg>
          <label for="a-shape">shape</label><span class="box combo"><select id="a-shape"><option>1: rectangle</option></select></span><svg class="s9"><use href="#ok"/></svg>
          <label for="a-width">width</label><span class="box"><input id="a-width" value="10"><svg class="s9"><use href="#clear"/></svg></span><svg class="s9"><use href="#ok"/></svg>
          <label for="a-height">height</label><span class="box"><input id="a-height" value="3"><svg class="s9"><use href="#clear"/></svg></span><svg class="s9"><use href="#ok"/></svg>
        </form>
      </div>
    </div>
  </div>
  <div class="dialog-foot"><button class="btn soft show-all"><svg class="s13"><use href="#filtery"/></svg>Alle objecten tonen<i class="caret"></i></button><span class="fill"></span><button class="view on"><svg class="s13"><use href="#formv"/></svg></button><button class="view"><svg class="s13"><use href="#table"/></svg></button></div>
</section>

<svg class="leaders" viewBox="0 0 1292 694" aria-hidden="true"><path d="M265 440l34 28M305 177l-34 40M342 178v40M651 343l-33 41" stroke="#fe0000" stroke-width="4"/></svg>
<div class="mark m-layer"></div><div class="mark m-edit"></div><div class="mark m-save"></div><div class="mark m-form"></div>
<div class="mark num n1">1</div><div class="mark num n2">2</div><div class="mark num n3">3</div><div class="mark num n4">4</div>
</body>
</html>
```
FILE: styles.css
```css
*{box-sizing:border-box}
html,body{height:100%}
body{margin:0;display:flex;flex-direction:column;overflow:hidden;position:relative;background:#fafafa;color:#222;font:10px/14px "Open Sans","Noto Sans",sans-serif}
button,input,select{font:inherit;color:inherit;margin:0;padding:0;border:0;background:none;border-radius:0;outline:0}
button{display:flex;align-items:center;justify-content:center;white-space:nowrap}
i{font-style:normal}
svg{flex:none;display:block;width:16px;height:16px}
.sprite{position:absolute;width:0;height:0}
.s8{width:8px;height:8px}
.s9{width:9px;height:9px}
.s12{width:12px;height:12px}
.s13{width:13px;height:13px}
.w29{width:29px}.w42{width:42px}.w44{width:44px}.w56{width:56px}.w58{width:58px}.w60{width:60px}.w62{width:62px}.w65{width:65px}.w68{width:68px}.w70{width:70px}.w74{width:74px}.w106{width:106px}.w211{width:211px}.w233{width:233px}.w239{width:239px}.w315{width:315px}

.titlebar{display:flex;align-items:center;height:19px;padding-left:3px;background:#fff;color:#999}
.ico{width:14px;height:14px}
.title-text{margin-left:3px;font-size:10px}
.win-controls{display:flex;margin-left:auto}
.win-controls button{width:40px}
.win-controls svg{width:10px;height:10px}
.titlebar .win-controls{margin-right:-6px}
.menubar{display:flex;gap:9px;height:18px;margin-left:2px;padding-left:6px;background:#f75c5c;color:#4a2a2a}
.menubar u{text-underline-offset:2px}

.toolbar{display:flex;height:25px;padding-left:5px;background:#fafffe;border-bottom:1px solid #b5b5b5}
.toolbar.tall{height:38px;border-bottom:0}
.tools{display:flex;align-items:center;justify-content:space-between;border-right:1px solid #b5b5b5}
.tools:last-child{border-right:0}
.tools.w29,.tools.w74,.tools.w65,.tools.w315{justify-content:flex-start}
.tools+.tools,.tools+.anim{padding-left:3px}
.grip{flex:none;width:5px;height:14px;padding:0 1px;background:repeating-linear-gradient(#c8325a 0 2px,transparent 2px 5px) content-box}
.grip.big{height:15px;padding:0;background:repeating-linear-gradient(#c8103c 0 3px,transparent 3px 6px)}
.t{flex:none;width:22px;height:22px}
.t.on,.pager .on,.view.on,.dialog-tools .on{background:#ececec;border:1px solid #bdbdbd;border-radius:2px}
.off svg{opacity:.35;filter:grayscale(.8)}
.half svg{opacity:.7}
.caret{flex:none;width:10px;height:4px;background:#555;clip-path:polygon(2px 0,8px 0,5px 4px)}
.more{width:12px;text-align:center;font-size:12px;line-height:16px}
.combo,.spin{position:relative;display:flex;align-items:center;height:16px;background:#fff;border:1px solid #777;border-radius:3px;font-size:9px}
.toolbar .combo,.toolbar .spin{flex:none;margin-right:1px}
.combo select{appearance:none;flex:1;width:100%;min-width:0;height:14px;padding:0 10px 0 2px}
.combo::after,.spin::before,.spin::after{content:"";position:absolute;right:3px;width:6px;height:3px;background:#999;clip-path:polygon(0 0,100% 0,50% 100%)}
.spin::before{left:3px}
.spin::after{transform:rotate(180deg)}
.spin input{width:100%;height:14px;padding-left:12px}
.btn{height:18px;border:1px solid #777;border-radius:3px;background:#fdfdfd;font-size:9px}
.anim{display:flex;flex:1;align-items:center;gap:5px;padding-right:2px}
.anim .btn{margin-left:3px;overflow:hidden}
.slider{appearance:none;flex:1;height:10px;border-top:1px solid #444;align-self:flex-start;margin-top:14px;overflow:visible}
.slider::-webkit-slider-thumb{appearance:none;width:11px;height:11px;margin-top:-6px;border:1px solid #555;border-radius:50%;background:#f75c5c}
.anim-end{display:flex;align-items:center;justify-content:flex-end;width:62px;background:#fafafa;overflow:hidden}
.edge-check{appearance:none;flex:none;width:12px;height:12px;margin-right:-8px;border:1px solid #999}

.work{display:flex;flex:1;min-height:0}
.layers{display:flex;flex-direction:column;width:276px;margin-left:2px}
.dock-title{display:flex;align-items:center;gap:3px;height:12px;padding:0 1px 0 9px;border:1px solid #333;background:#fff;line-height:10px}
.dock-title span{flex:1}
.layer-tools{display:flex;align-items:center;height:19px;padding-left:2px;background:#fafffe}
.layer-tools button{width:17px}
.layer-tools svg{width:11px;height:11px}
.tree-box{display:flex;flex:1;min-height:0;flex-direction:column;border:1px solid #777;background:#fafffe}
.tree-main{display:flex;flex:1;min-height:0}
.tree-clip{display:flex;flex:1;min-width:0;overflow:hidden}
.tree{display:flex;flex:1;min-width:0;flex-direction:column;list-style:none;margin:-1px 0 -9px;padding:0}
.tree li{display:flex;flex:1 0 0;min-height:0;align-items:center;padding-right:3px;white-space:nowrap;background:linear-gradient(#ddd,#ddd) right center/2px 11px no-repeat}
.tree li.current{background:#77869c}
.tree label{display:flex;align-items:center}
.tree b{color:#111;font-weight:600}
.tree svg{width:13px;height:13px;margin-right:4px}
.tree i{flex:none;width:6px;height:4px;margin-right:8px}
.tree i.open{background:#999;clip-path:polygon(0 0,100% 0,50% 100%)}
.l1{padding-left:39px}.l2{padding-left:56px}.l3{padding-left:73px}.l4{padding-left:90px}
.tree input{appearance:none;flex:none;width:11px;height:11px;margin-right:4px;border:1px solid #ccc;background:#fff}
.tree input:checked::before{content:"";display:block;width:9px;height:9px;background:#111;clip-path:polygon(0 50%,20% 40%,38% 68%,80% 0,100% 5%,48% 100%,32% 100%)}
.ln{width:13px;height:2px;margin-right:4px}
.c-orange{background:#fdbf5a}.c-blue{background:#7ab4f8}.c-red{background:#f02525}.c-grey{background:#999}.c-light{background:#ddd}.c-brown{background:#c07a7a}.c-green{background:#33b526}.c-lime{background:#5cc832}
.thick{height:6px;background:#606060}
.h-green{color:#3f9a63}.h-purple{color:#a94fc4}
.sq{width:13px;height:13px;margin-right:4px;border:1px solid #333;background:#fff}
.olive{border-color:#a5bd78}
.vscroll{display:flex;flex-direction:column;align-items:center;width:10px;background:#fff}
.up,.down{width:6px;height:5px;margin:2px 0;background:#999;clip-path:polygon(50% 0,100% 100%,0 100%)}
.down{clip-path:polygon(0 0,100% 0,50% 100%)}
.track{flex:1;width:10px;padding-top:191px;border:1px solid #888;border-radius:4px}
.thumb{height:194px;border-radius:4px;background:#bcbcbc}
.hscroll{display:flex;align-items:center;height:10px;background:#fff}
.hscroll span{width:9px;height:10px;border:1px solid #bbb}
.hthumb{flex:1;height:10px;border:1px solid #555;border-radius:5px;background:#f75c5c}
.left,.right{width:4px;height:6px;margin:0 2px;background:#999;clip-path:polygon(0 50%,100% 0,100% 100%)}
.right{clip-path:polygon(0 0,100% 50%,0 100%)}
.splitter{width:3px;margin:0 1px 0 2px;border-left:1px dotted #999;border-right:1px dotted #999}
.map{flex:1;min-width:0;border:1px solid #777;background:#fff;overflow:hidden}
.map svg{width:100%;height:100%}
.results{display:flex;flex-direction:column;width:306px;padding-left:6px}
.results .dock-title{height:17px;margin:0 -6px;background:#fdfdfd}
.result-list{display:flex;flex-direction:column;gap:5px;padding-top:96px;height:312px}
.result-list div{height:35px;border:1px solid #ddd;background:#fcfcfc}
.log{flex:1;border:1px solid #888;background:#fff}
.clear-log{width:97px;height:19px;margin:6px 0 41px}

.status,.dialog,.btn{font-family:Roboto,"Open Sans",sans-serif}
.status{display:flex;align-items:center;height:21px;padding:3px 0 0 4px;background:#fafafa;font-size:9px;white-space:nowrap}
.locate{display:flex;align-items:center;width:218px;height:16px;padding-left:6px;border:1px solid #777;border-radius:3px;background:#fff}
.locate input{flex:1;padding-left:8px}
.locate input::placeholder{color:#888;opacity:1}
.hint{flex:1;margin-left:7px}
.pair{display:flex;align-items:center;gap:3px;margin-right:6px}
.field,.pair .combo,.pair .spin{height:16px;font-family:"Open Sans",sans-serif}
.field{border:1px solid #777;border-radius:3px;background:#fff;text-align:center}
.status>svg{margin-right:6px}
.render input{appearance:none;width:8px;height:8px;background:#111;clip-path:polygon(0 0,100% 0,100% 100%,0 100%,0 0,20% 20%,20% 80%,50% 60%,80% 80%,60% 50%,80% 20%,50% 40%,20% 20%)}
.crs{gap:3px;margin-right:13px}
.crs:last-child{width:10px;margin-right:0;justify-content:flex-start}

.dialog{position:absolute;left:294px;top:130px;right:30px;height:412px;display:flex;flex-direction:column;background:#fafafa;border:1px solid #888;box-shadow:0 5px 14px rgba(0,0,0,.5);font-size:9px}
.dialog-title{display:flex;align-items:center;height:24px;padding-left:5px;background:#fff;color:#111;border-bottom:1px solid #ddd;font-family:"Open Sans",sans-serif}
.dialog-title .title-text{margin-left:6px}
.dialog-tools{display:flex;align-items:center;height:20px;background:#fafffe;border-bottom:1px solid #ddd}
.dialog-tools button{width:17px;height:16px}
.dialog-tools svg{width:11px;height:11px}
.dialog-tools hr{width:1px;height:6px;margin:0 2px 0 1px;border:0;background:#888}
.calc{display:flex;align-items:center;height:21px;padding:0 0 0 1px}
.calc .combo{height:18px}
.abc{padding-left:2px;font-size:8px;font-weight:700}
.eq{width:11px;text-align:center}
.sq18{width:19px;border-color:#bbb}
.grow{flex:1;margin:0 4px 0 5px}
.soft{height:16px;border-color:#bbb;margin-right:2px}
.calc .soft:last-child{margin-right:0}
.dim{color:#555}
.dialog-body{display:flex;flex:1;min-height:0;gap:3px}
.list-side{display:flex;flex-direction:column;width:173px}
.expr{justify-content:flex-start;height:18px;padding-left:4px;gap:2px;border:1px solid #7890a0;background:#fff}
.expr .caret{margin:8px 0 0 auto}
.feature-list{flex:1;margin-top:3px;border:1px solid #666;background:#fafffe}
.feature{display:flex;align-items:center;height:17px;padding-left:3px;background:#77869c}
.feature input{appearance:none;width:8px;height:8px;background:#f4f4f4;border:1px solid #ccc}
.feature span{margin-left:8px}
.pager{display:flex;align-items:center;height:21px}
.pager button{width:17px;height:18px}
.pager svg{width:13px;height:13px}
.pager button:nth-last-child(-n+2){width:20px}
.count{margin:0 8px 0 1px;font:12px/14px "Open Sans",sans-serif;color:#111}
.fill{flex:1}
.form-side{display:flex;flex:1;flex-direction:column;padding:7px 8px 7px 7px;border:1px solid #777}
.tab{align-self:flex-start;width:38px;height:16px;border:1px solid #777;border-bottom:0;background:#f75c5c}
.tab-page{flex:1;padding:15px 18px 15px 14px;border:1px solid #888}
.attrs{display:grid;grid-template-columns:29px 1fr 9px;row-gap:5px;align-items:center}
.attrs>svg{margin-left:5px}
.box{display:flex;align-items:center;height:16px;padding:0 4px 0 3px;border:1px solid #777;border-radius:2px;background:#fff;font-size:9px}
.box input{flex:1;height:14px}
.box.combo{padding:0}
.dialog-foot{display:flex;align-items:center;height:20px;padding:0 1px 0 2px}
.show-all{gap:3px;height:18px;padding-left:3px}
.show-all .caret{align-self:flex-end}
.view{width:19px;height:18px}

.leaders{position:absolute;left:0;top:0;width:1292px;height:694px;pointer-events:none}
.mark{position:absolute;border:4px solid #fe0000}
.m-layer{left:0;top:431px;width:267px;height:18px}
.m-edit{left:288px;top:151px;width:28px;height:29px}
.m-save{left:320px;top:151px;width:27px;height:29px}
.m-form{left:486px;top:227px;right:44px;height:118px}
.num{display:flex;align-items:center;justify-content:center;width:44px;height:49px;background:#fff;color:#111;font-size:21px}
.n1{left:298px;top:444px}
.n2{left:231px;top:205px}
.n3{left:576px;top:368px}
.n4{left:320px;top:216px}
```
